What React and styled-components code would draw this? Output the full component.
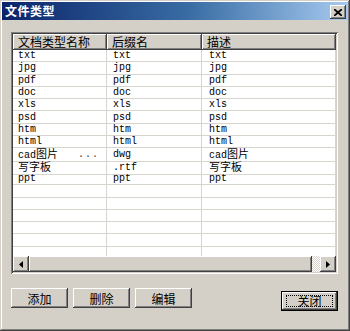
import styled, { createGlobalStyle } from "styled-components";

const GlobalStyle = createGlobalStyle`
	html, body {
		margin: 0;
		padding: 0;
		background: #d4d0c8;
	}
	* {
		box-sizing: border-box;
	}
`;

const FACE = "#d4d0c8";
const SHADOW = "#808080";
const DARK = "#404040";
const HAN = /([\u4e00-\u9fff]+)/;

const raised = `
	background: ${FACE};
	box-shadow: inset -1px -1px ${DARK}, inset 1px 1px #ffffff,
		inset -2px -2px ${SHADOW}, inset 2px 2px ${FACE};
`;

const Window = styled.div`
	width: 350px;
	height: 331px;
	padding: 2px;
	display: flex;
	flex-direction: column;
	background: ${FACE};
	box-shadow: inset -1px -1px ${DARK}, inset 1px 1px ${FACE},
		inset -2px -2px ${SHADOW}, inset 2px 2px #ffffff;
	font-family: "Noto Sans CJK SC", sans-serif;
`;

const TitleBar = styled.div`
	height: 18px;
	display: flex;
	align-items: flex-start;
	justify-content: space-between;
	padding: 0 2px 0 3px;
	background: linear-gradient(to right, #0a246a 0%, #3a6ea5 55%, #a6caf0 100%);
`;

const Title = styled.span`
	color: #ffffff;
	font-size: 12px;
	font-weight: 700;
	line-height: 18px;
	letter-spacing: 0.5px;
`;

const CloseBox = styled.div`
	width: 16px;
	height: 14px;
	margin-top: 3px;
	display: flex;
	align-items: center;
	justify-content: center;
	${raised}
`;

const Content = styled.div`
	flex: 1;
	display: flex;
	flex-direction: column;
	padding: 12px 10px 0 9px;
`;

const ListView = styled.div`
	height: 242px;
	display: flex;
	flex-direction: column;
	padding: 2px;
	background: #ffffff;
	box-shadow: inset 1px 1px ${SHADOW}, inset -1px -1px #ffffff,
		inset 2px 2px ${DARK}, inset -2px -2px ${FACE};
`;

const Columns = styled.div`
	display: grid;
	grid-template-columns: 94px 95px 134px;
`;

const HeaderCell = styled.div`
	height: 16px;
	padding-left: 5px;
	font-size: 12px;
	line-height: 16px;
	color: #000000;
	${raised}
`;

const Body = styled.div`
	height: 206px;
	overflow: hidden;
`;

const Row = styled(Columns)`
	height: 12.3px;
`;

const Cell = styled.div`
	display: flex;
	align-items: center;
	justify-content: space-between;
	padding: 0 7px 0 ${(p) => p.$indent}px;
	border-right: 1px solid #d8d5ce;
	border-bottom: 1px solid #d8d5ce;
	font-family: "Liberation Mono", "Noto Sans CJK SC", monospace;
	font-size: 10px;
	line-height: 11px;
	color: #000000;
	white-space: nowrap;
`;

const Han = styled.span`
	font-family: "Noto Sans CJK SC", sans-serif;
	font-size: 11px;
	line-height: 11px;
`;

const Ellipsis = styled.span`
	color: #404040;
	letter-spacing: 1px;
`;

const ScrollBar = styled.div`
	height: 16px;
	display: flex;
`;

const ArrowButton = styled.div`
	width: 16px;
	height: 16px;
	display: flex;
	align-items: center;
	justify-content: center;
	${raised}
`;

const Thumb = styled.div`
	width: 283px;
	height: 16px;
	${raised}
`;

const Track = styled.div`
	flex: 1;
	background: repeating-conic-gradient(#ffffff 0% 25%, ${FACE} 0% 50%) 0 0 / 2px 2px;
`;

const ButtonRow = styled.div`
	display: flex;
	align-items: flex-start;
	gap: 5px;
	margin-top: 14px;
`;

const Button = styled.div`
	width: 57px;
	height: 20px;
	display: flex;
	align-items: center;
	justify-content: center;
	font-size: 12px;
	color: #000000;
	${raised}
`;

const DefaultButton = styled(Button)`
	margin-left: auto;
	margin-top: 3px;
	box-shadow: inset 0 0 0 1px #000000, inset -2px -2px ${DARK},
		inset 2px 2px #ffffff, inset -3px -3px ${SHADOW};
`;

const Focus = styled.span`
	width: 47px;
	height: 12px;
	display: flex;
	align-items: center;
	justify-content: center;
	border: 1px dotted #000000;
	line-height: 10px;
`;

const files = [
	{ name: "txt", ext: "txt", desc: "txt" },
	{ name: "jpg", ext: "jpg", desc: "jpg" },
	{ name: "pdf", ext: "pdf", desc: "pdf" },
	{ name: "doc", ext: "doc", desc: "doc" },
	{ name: "xls", ext: "xls", desc: "xls" },
	{ name: "psd", ext: "psd", desc: "psd" },
	{ name: "htm", ext: "htm", desc: "htm" },
	{ name: "html", ext: "html", desc: "html" },
	{ name: "cad图片", ext: "dwg", desc: "cad图片", cut: true },
	{ name: "写字板", ext: ".rtf", desc: "写字板" },
	{ name: "ppt", ext: "ppt", desc: "ppt" },
];

// latin text in the small mono face, chinese runs in the cjk face
function mixed(text) {
	return text
		.split(HAN)
		.filter(Boolean)
		.map((part, i) =>
			HAN.test(part) ? <Han key={i}>{part}</Han> : <span key={i}>{part}</span>
		);
}

function Arrow({ left }) {
	return (
		<svg width="4" height="7" viewBox="0 0 4 7">
			<path d={left ? "M4 0 L0 3.5 L4 7 Z" : "M0 0 L4 3.5 L0 7 Z"} fill="#000" />
		</svg>
	);
}

export default function App() {
	const blanks = Array.from({ length: 6 });
	return (
		<>
			<GlobalStyle />
			<Window>
				<TitleBar>
					<Title>文件类型</Title>
					<CloseBox>
						<svg width="8" height="7" viewBox="0 0 8 7">
							<path d="M0 0 L8 7 M8 0 L0 7" stroke="#000" strokeWidth="1.8" />
						</svg>
					</CloseBox>
				</TitleBar>
				<Content>
					<ListView>
						<Columns>
							<HeaderCell>文档类型名称</HeaderCell>
							<HeaderCell>后缀名</HeaderCell>
							<HeaderCell>描述</HeaderCell>
						</Columns>
						<Body>
							{files.map((f) => (
								<Row key={f.ext}>
									<Cell $indent={5}>
										<span>{mixed(f.name)}</span>
										{f.cut && <Ellipsis>...</Ellipsis>}
									</Cell>
									<Cell $indent={6}>
										<span>{mixed(f.ext)}</span>
									</Cell>
									<Cell $indent={7}>
										<span>{mixed(f.desc)}</span>
									</Cell>
								</Row>
							))}
							{blanks.map((_, i) => (
								<Row key={i}>
									<Cell $indent={5} />
									<Cell $indent={6} />
									<Cell $indent={7} />
								</Row>
							))}
						</Body>
						<ScrollBar>
							<ArrowButton>
								<Arrow left />
							</ArrowButton>
							<Thumb />
							<Track />
							<ArrowButton>
								<Arrow />
							</ArrowButton>
						</ScrollBar>
					</ListView>
					<ButtonRow>
						<Button>添加</Button>
						<Button>删除</Button>
						<Button>编辑</Button>
						<DefaultButton>
							<Focus>关闭</Focus>
						</DefaultButton>
					</ButtonRow>
				</Content>
			</Window>
		</>
	);
}
